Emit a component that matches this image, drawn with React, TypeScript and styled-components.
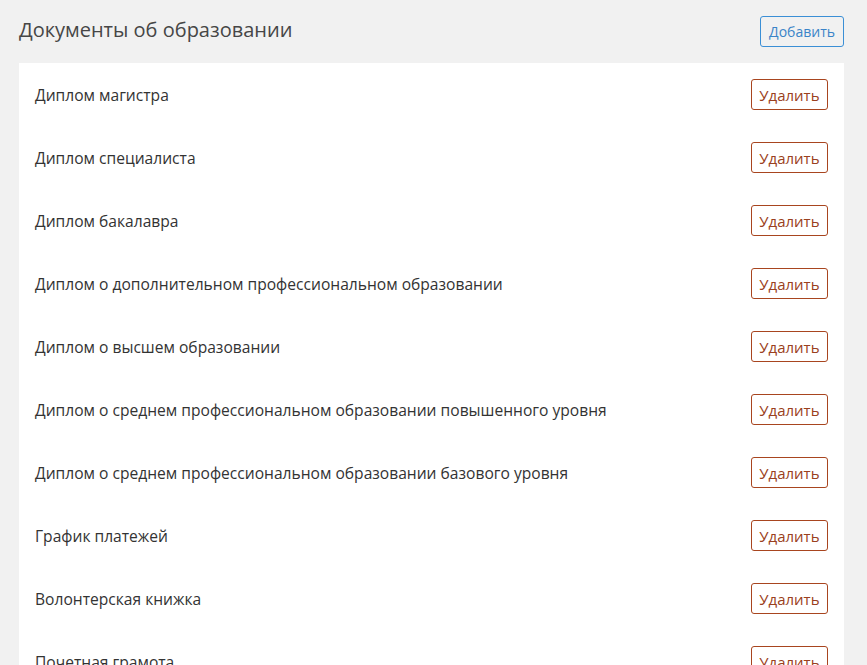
import React from "react";
import styled, { createGlobalStyle } from "styled-components";

const Global = createGlobalStyle`
  html, body { margin: 0; padding: 0; background: #f1f1f1; }
  body { font-family: "Open Sans", "Noto Sans", sans-serif; }
`;

const Page = styled.div`
  padding: 16px 23px 0 19px;
  background: #f1f1f1;
  min-height: 665px;
  box-sizing: border-box;
`;

const Header = styled.div`
  display: flex;
  align-items: center;
  justify-content: space-between;
  height: 31px;
  margin-bottom: 16px;
`;

const Title = styled.h1`
  margin: -4px 0 0 0;
  font-size: 20px;
  font-weight: 400;
  color: #464646;
`;

const Button = styled.button<{ $tone: "blue" | "red" }>`
  height: 31px;
  box-sizing: border-box;
  padding: 0 ${(p) => (p.$tone === "blue" ? "8px" : "7.5px")};
  background: transparent;
  border: 1px solid ${(p) => (p.$tone === "blue" ? "#3b8fd6" : "#a8451f")};
  color: ${(p) => (p.$tone === "blue" ? "#3a84c8" : "#9a4020")};
  border-radius: 3px;
  font-family: "Open Sans", "Noto Sans", sans-serif;
  font-size: ${(p) => (p.$tone === "blue" ? "14px" : "15px")};
  cursor: pointer;
`;

const Card = styled.div`
  background: #fff;
  padding: 0 16px 0 16px;
`;

const Row = styled.div`
  height: 63px;
  display: flex;
  align-items: center;
  justify-content: space-between;
`;

const Name = styled.span`
  font-size: 15.6px;
  color: #333;
`;

const docs = [
  "Диплом магистра",
  "Диплом специалиста",
  "Диплом бакалавра",
  "Диплом о дополнительном профессиональном образовании",
  "Диплом о высшем образовании",
  "Диплом о среднем профессиональном образовании повышенного уровня",
  "Диплом о среднем профессиональном образовании базового уровня",
  "График платежей",
  "Волонтерская книжка",
  "Почетная грамота",
];

export default function App() {
  return (
    <>
      <Global />
      <Page>
        <Header>
          <Title>Документы об образовании</Title>
          <Button $tone="blue">Добавить</Button>
        </Header>
        <Card>
          {docs.map((d) => (
            <Row key={d}>
              <Name>{d}</Name>
              <Button $tone="red">Удалить</Button>
            </Row>
          ))}
        </Card>
      </Page>
    </>
  );
}
